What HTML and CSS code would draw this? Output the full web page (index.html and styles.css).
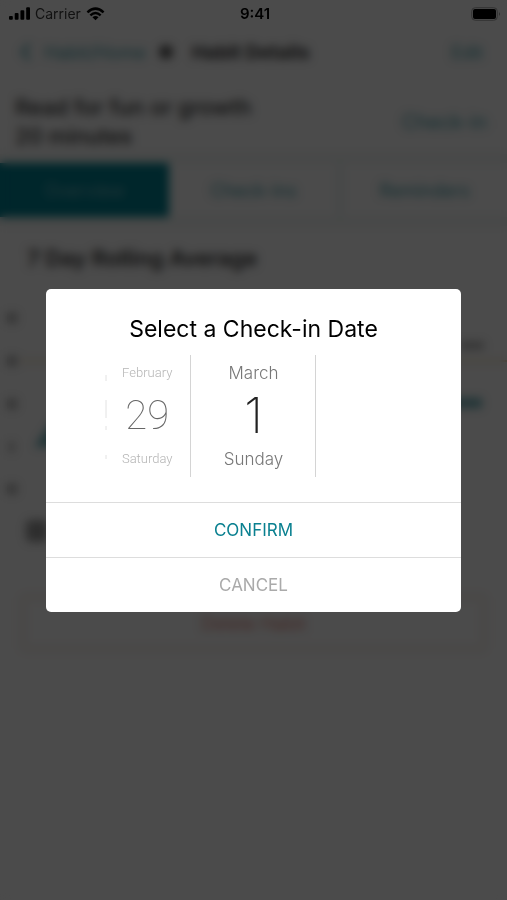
FILE: index.html
```html
<!DOCTYPE html>
<html lang="en">
<head>
<meta charset="utf-8">
<meta name="viewport" content="width=device-width, initial-scale=1">
<title>Select a Check-in Date</title>
<link rel="stylesheet" href="styles.css">
</head>
<body>
<header class="status">
  <div class="status-left">
    <svg class="signal" viewBox="0 0 22 13" aria-hidden="true"><rect x="0" y="9" width="4" height="4" rx="1"/><rect x="6" y="6" width="4" height="7" rx="1"/><rect x="12" y="3" width="4" height="10" rx="1"/><rect x="18" y="0" width="4" height="13" rx="1"/></svg>
    <span>Carrier</span>
    <svg class="wifi" viewBox="0 0 20 14" aria-hidden="true"><path d="M1.5 5.2Q10-2.6 18.5 5.2M4.6 8.4Q10 3.6 15.4 8.4" fill="none" stroke="#000" stroke-width="2.6"/><path d="M6.8 10.3Q10 7.8 13.2 10.3L10 13.6Z"/></svg>
  </div>
  <time class="clock">9:41</time>
  <svg class="battery" viewBox="0 0 30 14" aria-hidden="true"><rect x=".7" y=".7" width="25.6" height="12.6" rx="3.6" fill="none" stroke="#333"/><rect x="2" y="2" width="23" height="10" rx="2"/><path d="M28 5Q29.6 7 28 9Z" fill="#222"/></svg>
</header>

<main class="app" inert>
  <nav class="navbar">
    <a class="back" href="#"><svg viewBox="0 0 12 20" aria-hidden="true"><path d="M10 2L2 10l8 8" fill="none" stroke="currentColor" stroke-width="3"/></svg>Habit/Home</a>
    <svg class="nav-icon" viewBox="0 0 16 16" aria-hidden="true"><circle cx="8" cy="8" r="7"/></svg>
    <h1>Habit Details</h1>
    <a class="edit" href="#">Edit</a>
  </nav>
  <section class="habit">
    <h2>Read for fun or growth<br>20 minutes</h2>
    <button class="checkin">Check-in</button>
  </section>
  <div class="tabs">
    <button class="tab active">Overview</button>
    <button class="tab">Check-ins</button>
    <button class="tab">Reminders</button>
  </div>
  <section class="report">
    <h2>7 Day Rolling Average</h2>
    <svg class="chart" viewBox="0 0 507 220" preserveAspectRatio="none" aria-hidden="true">
      <g fill="#aaa"><rect x="7" y="19" width="10" height="10"/><rect x="7" y="62" width="10" height="10"/><rect x="7" y="105" width="10" height="10"/><rect x="9" y="148" width="5" height="10"/><rect x="7" y="190" width="10" height="10"/><rect x="460" y="48" width="24" height="7"/></g>
      <path d="M20 67H507" stroke="#f0d3a6" stroke-width="2"/>
      <path d="M34 153L60 116V153ZM450 104H482V114H450Z" fill="#6fb0b8"/>
    </svg>
    <div class="note"><svg viewBox="0 0 22 22" aria-hidden="true"><rect width="22" height="22" rx="5"/></svg></div>
    <button class="delete">Delete Habit</button>
  </section>
</main>

<div class="overlay">
  <section class="dialog" role="dialog" aria-modal="true" aria-labelledby="dialog-title">
    <h2 class="dialog-title" id="dialog-title">Select a Check-in Date</h2>
    <div class="picker">
      <div class="side">
        <svg class="sliver" viewBox="0 0 3 104" aria-hidden="true"><path d="M1 11v6M1 36v18M1 62v4M1 91v4" stroke="#e2e2e2" fill="none"/></svg>
        <button class="day previous"><span>February</span><strong>29</strong><span>Saturday</span></button>
      </div>
      <button class="day current" aria-current="date"><span>March</span><strong>1</strong><span>Sunday</span></button>
      <div class="side"></div>
    </div>
    <button class="action confirm">CONFIRM</button>
    <button class="action cancel">CANCEL</button>
  </section>
</div>
</body>
</html>
```
FILE: styles.css
```css
* { box-sizing: border-box; }
body {
  margin: 0;
  min-height: 100vh;
  background: #fafafa;
  color: #000;
  font-family: Inter, "Liberation Sans", sans-serif;
}
button { font: inherit; border: 0; background: none; padding: 0; }
a { color: #078292; text-decoration: none; }
h1, h2 { margin: 0; }

.status {
  position: relative;
  z-index: 2;
  display: grid;
  grid-template-columns: 1fr auto 1fr;
  align-items: center;
  height: 27px;
  padding: 0 6px 0 9px;
  font-size: 14px;
}
.status-left { display: flex; align-items: center; gap: 5px; color: #111; }
.signal { width: 21px; height: 13px; }
.wifi { width: 19px; height: 14px; }
.clock { font-size: 15px; font-weight: 600; }
.battery { width: 30px; height: 14px; justify-self: end; }

.navbar {
  display: flex;
  align-items: center;
  height: 50px;
  padding: 0 24px 0 20px;
  font-size: 18px;
  color: #333;
}
.navbar a { color: #4a9fa9; }
.back { display: flex; align-items: center; gap: 12px; }
.back svg { width: 12px; height: 20px; }
.nav-icon { width: 16px; height: 16px; margin: 0 18px 0 12px; fill: #555; }
.navbar h1 { font-size: 19px; font-weight: 700; }
.edit { margin-left: auto; }

.habit {
  display: flex;
  align-items: center;
  justify-content: space-between;
  height: 86px;
  padding: 4px 20px 0 15px;
  color: #333;
}
.habit h2 { font-size: 22px; line-height: 29px; font-weight: 500; }
.checkin { color: #4a9fa9; font-size: 20px; }

.tabs {
  display: grid;
  grid-template-columns: repeat(3, 1fr);
  height: 54px;
  box-shadow: 0 0 0 9px #edf2f0;
}
.tab { background: #fafafa; color: #4a9fa9; font-size: 18px; }
.tab + .tab + .tab { border-left: 4px solid #dde8e8; }
.tab.active { background: #007f90; color: #74b5bd; }

.report { padding-top: 27px; }
.report h2 { padding-left: 27px; font-size: 22px; line-height: 28px; font-weight: 600; color: #333; }
.chart { display: block; width: 100%; height: 220px; margin-top: 22px; }
.note { height: 34px; margin: 6px 26px 42px; }
.note svg { width: 22px; height: 22px; fill: #999; }
.delete {
  display: block;
  width: calc(100% - 44px);
  height: 54px;
  margin: 0 auto;
  border: 2px solid #f0d8c6;
  border-radius: 4px;
  color: #e08a80;
  font-size: 18px;
}

.overlay {
  position: fixed;
  inset: 0;
  z-index: 1;
  display: flex;
  align-items: center;
  justify-content: center;
  background: rgba(0, 0, 0, 0.7);
  backdrop-filter: blur(5px);
}
.dialog {
  width: 82%;
  overflow: hidden;
  background: #fff;
  border-radius: 5px;
}
.dialog-title {
  padding: 25px 0 11px;
  text-align: center;
  font-size: 23px;
  line-height: 30px;
  font-weight: 400;
}
.picker { display: grid; grid-template-columns: 1fr 126px 1fr; height: 122px; margin-bottom: 25px; }
.side { display: flex; align-items: center; justify-content: flex-end; gap: 14px; padding-right: 18px; }
.sliver { width: 3px; height: 104px; }
.day { display: flex; flex-direction: column; align-items: center; justify-content: center; font-weight: 300; }
.day span { font-size: 17px; line-height: 24px; color: #777; }
.day strong { font-size: 49px; line-height: 62px; font-weight: 200; color: #222; }
.current { border: solid #d4d4d4; border-width: 0 1px; }
.previous { font-family: Roboto, "Liberation Sans", sans-serif; }
.previous span { font-size: 13px; color: #b5b5b5; }
.previous strong { font-size: 40px; font-weight: 100; color: #666; }
.action { display: block; width: 100%; height: 55px; border-top: 1px solid #ddd; font-size: 17px; }
.confirm { color: #0a8090; }
.cancel { color: #aaa; }
```
